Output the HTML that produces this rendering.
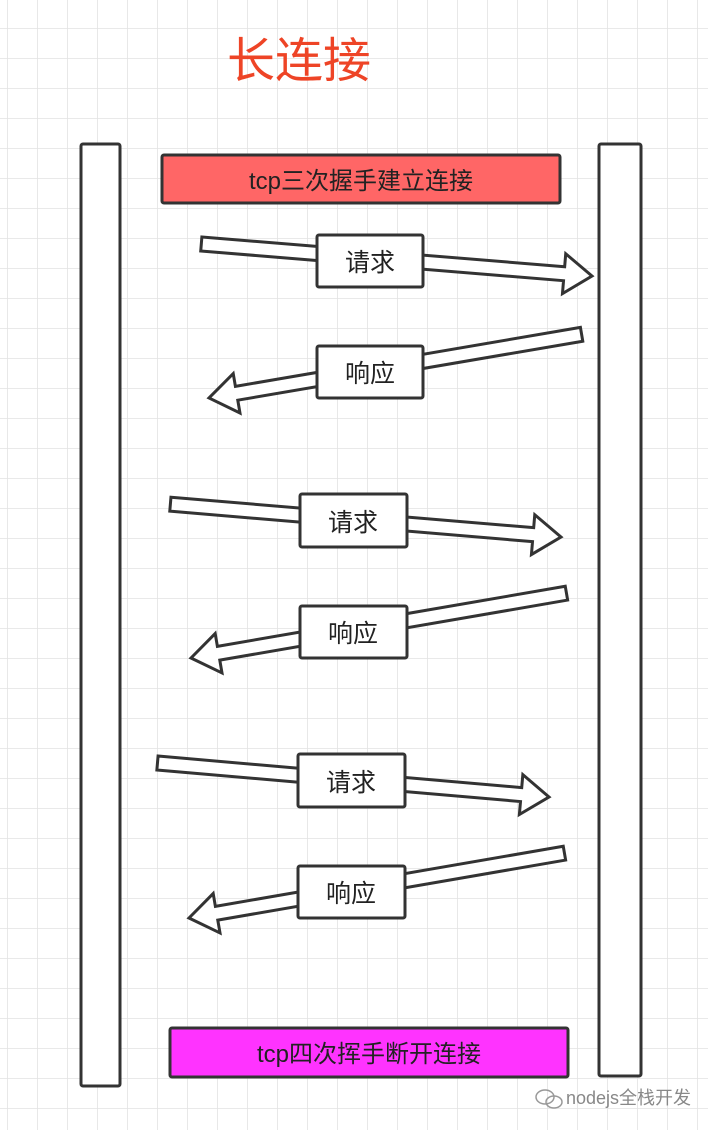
<!DOCTYPE html>
<html><head><meta charset="utf-8"><style>
html,body{margin:0;padding:0;background:#fff}
body{width:708px;height:1130px;overflow:hidden}
svg{display:block}
text{font-family:"Liberation Sans","Noto Sans CJK SC",sans-serif}
</style></head><body>
<svg width="708" height="1130" viewBox="0 0 708 1130" xmlns="http://www.w3.org/2000/svg">
<defs>
<pattern id="g" x="7" y="28" width="30" height="30" patternUnits="userSpaceOnUse">
<path d="M0 0H30M0 0V30" stroke="#e2e2e2" stroke-width="1.6" fill="none"/>
</pattern>
</defs>
<rect width="708" height="1130" fill="#fff"/>
<rect width="708" height="1130" fill="url(#g)"/>
<text x="227" y="77" font-size="48" fill="#ee4426">长连接</text>

<rect x="81" y="144" width="39" height="942" rx="2" fill="#fff" stroke="#333" stroke-width="3"/>
<rect x="599" y="144" width="42" height="932" rx="2" fill="#fff" stroke="#333" stroke-width="3"/>

<rect x="162" y="155" width="398" height="48" rx="2" fill="#ff6666" stroke="#333" stroke-width="3"/>
<text x="361" y="189" font-size="24" fill="#222" text-anchor="middle">tcp三次握手建立连接</text>

<rect x="170" y="1028" width="398" height="49" rx="2" fill="#ff33ff" stroke="#333" stroke-width="3"/>
<text x="369" y="1062" font-size="24" fill="#222" text-anchor="middle">tcp四次挥手断开连接</text>

<g fill="#fff" stroke="#333" stroke-width="3" stroke-linejoin="miter">
<polygon transform="translate(592,276) rotate(4.68)" points="-392,-7 -28,-7 -28,-20 0,0 -28,20 -28,7 -392,7"/>
<polygon transform="translate(209,398) rotate(170.3)" points="-378,-7 -28,-7 -28,-20 0,0 -28,20 -28,7 -378,7"/>
<polygon transform="translate(561,537) rotate(4.8)" points="-392,-7 -28,-7 -28,-20 0,0 -28,20 -28,7 -392,7"/>
<polygon transform="translate(191,658) rotate(170.2)" points="-381,-7 -28,-7 -28,-20 0,0 -28,20 -28,7 -381,7"/>
<polygon transform="translate(549,797) rotate(4.96)" points="-393,-7 -28,-7 -28,-20 0,0 -28,20 -28,7 -393,7"/>
<polygon transform="translate(189,918) rotate(170.2)" points="-381,-7 -28,-7 -28,-20 0,0 -28,20 -28,7 -381,7"/>
</g>

<g fill="#fff" stroke="#333" stroke-width="3">
<rect x="317" y="235" width="106" height="52" rx="2"/>
<rect x="317" y="346" width="106" height="52" rx="2"/>
<rect x="300" y="494" width="107" height="53" rx="2"/>
<rect x="300" y="606" width="107" height="52" rx="2"/>
<rect x="298" y="754" width="107" height="53" rx="2"/>
<rect x="298" y="866" width="107" height="52" rx="2"/>
</g>
<g font-size="25" fill="#222" text-anchor="middle">
<text x="370" y="271">请求</text>
<text x="370" y="382">响应</text>
<text x="353" y="531">请求</text>
<text x="353" y="642">响应</text>
<text x="351" y="791">请求</text>
<text x="351" y="902">响应</text>
</g>

<g fill="none" stroke="#999" stroke-width="1.5">
<ellipse cx="545" cy="1097" rx="9" ry="7"/>
<ellipse cx="554" cy="1102" rx="8" ry="6"/>
</g>
<text x="566" y="1104" font-size="18" fill="#888">nodejs全栈开发</text>
</svg>
</body></html>
